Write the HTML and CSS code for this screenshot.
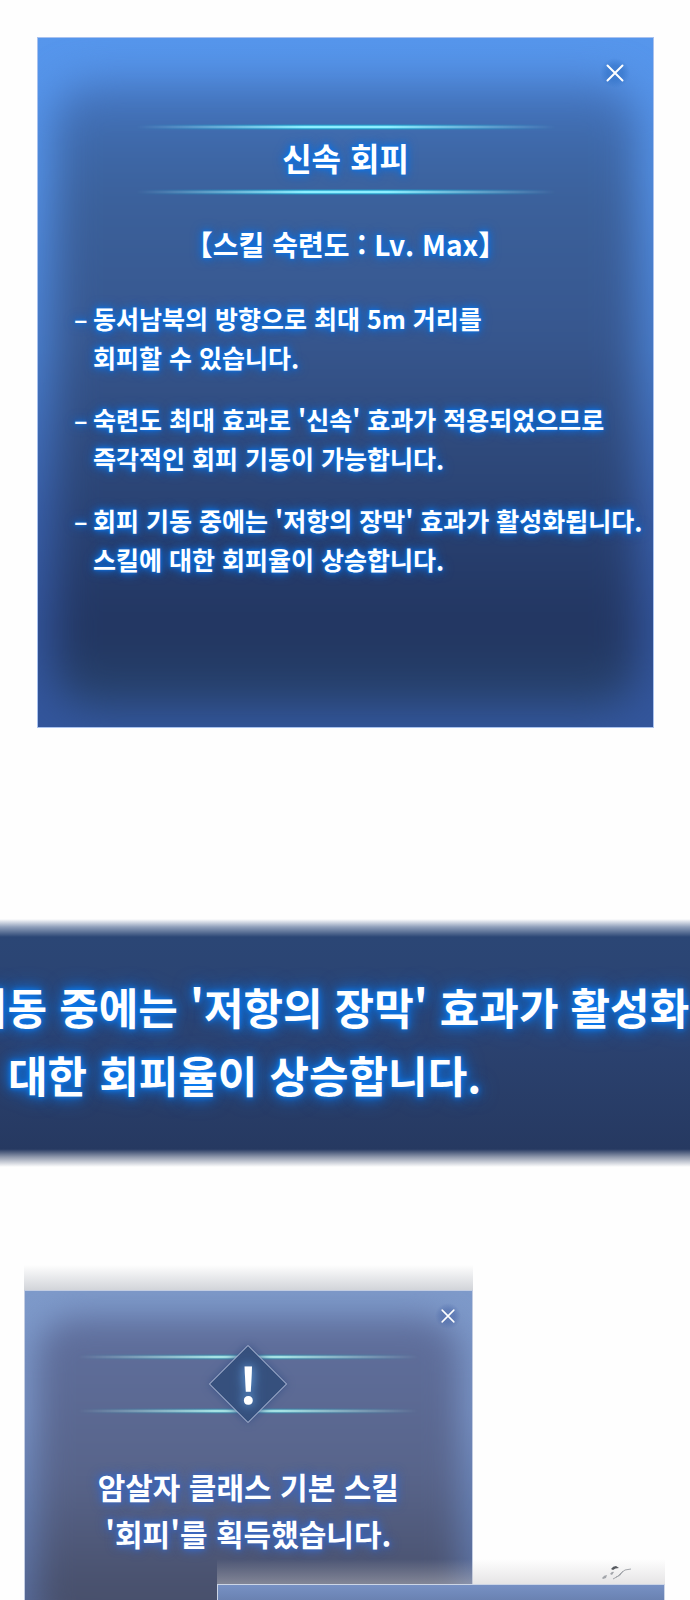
FILE: index.html
```html
<!DOCTYPE html>
<html lang="ko">
<head>
<meta charset="utf-8">
<meta name="viewport" content="width=device-width, initial-scale=1">
<title>신속 회피</title>
<link rel="stylesheet" href="styles.css">
</head>
<body>
<main class="page">
  <section class="panel skill">
    <button class="close" type="button" aria-label="닫기">
      <svg viewBox="0 0 18 18"><path d="M1.5 1.5 16.5 16.5M16.5 1.5 1.5 16.5"/></svg>
    </button>
    <header class="heading">
      <div class="rule"></div>
      <h1 class="title">신속 회피</h1>
      <div class="rule"></div>
      <p class="level">【스킬 숙련도 : Lv. Max】</p>
    </header>
    <ul class="effects">
      <li><span class="dash">–</span><span>동서남북의 방향으로 최대 5m 거리를<br>회피할 수 있습니다.</span></li>
      <li><span class="dash">–</span><span>숙련도 최대 효과로 '신속' 효과가 적용되었으므로<br>즉각적인 회피 기동이 가능합니다.</span></li>
      <li><span class="dash">–</span><span>회피 기동 중에는 '저항의 장막' 효과가 활성화됩니다.<br>스킬에 대한 회피율이 상승합니다.</span></li>
    </ul>
  </section>

  <section class="closeup">
    <p class="closeup-first">기동 중에는 '저항의 장막' 효과가 활성화</p>
    <p class="closeup-second">대한 회피율이 상승합니다.</p>
  </section>

  <section class="notices">
    <div class="notice-wrap">
      <div class="haze"></div>
      <div class="panel notice">
        <button class="close close-small" type="button" aria-label="닫기">
          <svg viewBox="0 0 18 18"><path d="M1.5 1.5 16.5 16.5M16.5 1.5 1.5 16.5"/></svg>
        </button>
        <div class="emblem">
          <div class="rule pale"></div>
          <div class="rule pale"></div>
          <div class="diamond">
            <svg viewBox="0 0 80 80"><path d="M40 1.5 78.5 40 40 78.5 1.5 40Z"/></svg>
            <span class="mark">!</span>
          </div>
        </div>
        <p class="message">암살자 클래스 기본 스킬<br>'회피'를 획득했습니다.</p>
      </div>
    </div>
    <div class="next-wrap">
      <div class="haze haze-next">
        <svg class="scribble" viewBox="0 0 32 18" aria-hidden="true">
          <path class="blot" d="M10 4Q12 1 15 1L18 3Q14 3 12 5Z"/>
          <path class="blot light" d="M1 13Q3 10 6 10L5 13 2 14ZM9 9Q11 6 13 7L11 10Z"/>
          <path class="stroke" d="M30 4Q23 4 20 8T12 14M22 6Q19 12 15 12"/>
        </svg>
      </div>
      <div class="next"></div>
    </div>
  </section>
</main>
</body>
</html>
```

FILE: styles.css
```css
* {
  box-sizing: border-box;
}

body {
  margin: 0;
  background: #fefefe;
  color: #fff;
  font-family: "Noto Sans CJK KR", "Noto Sans", sans-serif;
  font-weight: 700;
}

.page {
  overflow: hidden;
}

h1, p, ul {
  margin: 0;
  padding: 0;
}

.panel {
  position: relative;
  isolation: isolate;
  overflow: hidden;
  border: 1px solid #a9c2ef;
}

/* soft darker core inside the bright rim */
.panel::before {
  content: "";
  position: absolute;
  z-index: -1;
  inset: 44px 16px 20px;
  border-radius: 40px;
  filter: blur(20px);
}

.skill {
  margin: 37px 36px 0 37px;
  padding: 86px 36px 148px;
  background: linear-gradient(#5696ec, #5491e6 20%, #4a80d0 45%, #3a62ae 68%, #33559c 85%, #33569c);
}

.skill::before {
  background: linear-gradient(#4678c4, #3e68a8 10%, #3b609a 20%, #37578f 40%, #2f4a7c 58%, #284070 72%, #223560 88%, #28456f);
}

.close {
  position: absolute;
  top: 20px;
  right: 23px;
  width: 30px;
  height: 30px;
  padding: 6px;
  border: 0;
  border-radius: 8px;
  background: radial-gradient(closest-side, rgb(45 110 195 / 50%) 50%, transparent);
}

.close svg {
  display: block;
  fill: none;
  stroke: #fff;
  stroke-width: 2;
  stroke-linecap: round;
}

.close-small {
  top: 12px;
  right: 11px;
  width: 26px;
  height: 26px;
  background: radial-gradient(closest-side, rgb(75 105 170 / 50%) 50%, transparent);
}

.rule {
  width: 420px;
  max-width: 92%;
  height: 6px;
  margin: 0 auto;
  background: linear-gradient(transparent, #1e9cc8 20%, #8deeff 35% 65%, #1e9cc8 80%, transparent);
  -webkit-mask-image: linear-gradient(90deg, transparent, rgb(0 0 0 / 50%) 20%, #000 40% 60%, rgb(0 0 0 / 50%) 80%, transparent);
  mask-image: linear-gradient(90deg, transparent, rgb(0 0 0 / 50%) 20%, #000 40% 60%, rgb(0 0 0 / 50%) 80%, transparent);
}

.pale {
  width: 340px;
  background: linear-gradient(transparent, #3e85a6 20%, #a5e2e4 35% 65%, #3e85a6 80%, transparent);
}

.title,
.level,
.effects {
  text-shadow: 0 0 3px #0a78f0, 0 0 7px #0a74ea, 0 0 12px #0a6fe0;
}

.title {
  padding-bottom: 4px;
  font-size: 32px;
  line-height: 55px;
  text-align: center;
}

.level {
  margin-top: 30px;
  font-size: 28px;
  line-height: 38px;
  text-align: center;
  white-space: nowrap;
}

.effects {
  display: grid;
  gap: 23px;
  margin-top: 36px;
  font-size: 25px;
  line-height: 39px;
  list-style: none;
  white-space: nowrap;
}

.effects li {
  display: flex;
}

.dash {
  flex: none;
  width: 19px;
}

.closeup {
  margin-top: 191px;
  padding: 53px 0 59px;
  overflow: hidden;
  background: linear-gradient(#fefefe, #8f9fba 8px, #2b4675 18px, #2b4270 50%, #263961 calc(100% - 18px), #8f98ac calc(100% - 10px), #fefefe);
  font-size: 43px;
  line-height: 68px;
  white-space: nowrap;
  text-shadow: 0 0 5px #0a80f8, 0 0 12px #0a78f0, 0 0 20px #0a6fe0;
}

.closeup-first {
  margin-left: -32px;
}

.closeup-second {
  margin-left: 8px;
}

.notices {
  position: relative;
  margin-top: 98px;
}

.notice-wrap {
  width: 65%;
  margin-left: 24px;
}

.haze {
  height: 25px;
  background: linear-gradient(transparent, rgb(70 80 100 / 24%));
}

.notice {
  padding: 63px 0 43px;
  border-color: #c3cde2;
  border-bottom: 0;
  background: linear-gradient(#7e9aca, #7893c6 40%, #6680b4 70%, #586c9c);
}

.notice::before {
  inset: 26px 12px -40px;
  filter: blur(16px);
  background: linear-gradient(#60709e, #58648a 50%, #48506c 85%);
}

.emblem {
  display: grid;
  gap: 48px;
  position: relative;
}

.diamond {
  display: grid;
  place-content: center;
  place-items: center;
  position: absolute;
  inset: 0;
}

.diamond > * {
  grid-area: 1 / 1;
}

.diamond svg {
  width: 80px;
  height: 80px;
  fill: #36507d;
  stroke: #c0c9e2;
  filter: drop-shadow(0 0 4px #3b5488);
}

.mark {
  z-index: 1;
  padding-bottom: 4px;
  font-size: 50px;
  line-height: 60px;
  text-shadow: 0 0 8px #5b92d0, 0 0 14px #5b92d0;
}

.message {
  margin-top: 49px;
  font-size: 30px;
  line-height: 47px;
  text-align: center;
  white-space: nowrap;
  text-shadow: 0 0 4px #3b68c0, 0 0 8px #3b68c0, 0 0 12px #3b68c0;
}

/* the following card slides over the current one */
.next-wrap {
  position: absolute;
  right: 25px;
  bottom: 0;
  width: 65%;
}

.haze-next {
  display: flex;
  justify-content: flex-end;
  padding: 6px 32px 0 0;
  background: linear-gradient(transparent, rgb(200 198 200 / 45%));
}

.scribble {
  width: 32px;
  height: 18px;
}

.blot {
  fill: #55585e;
}

.light {
  fill: #a2a5aa;
}

.stroke {
  fill: none;
  stroke: #a2a5aa;
}

.next {
  height: 16px;
  border: 1px solid #ccd5e6;
  border-bottom: 0;
  background: linear-gradient(#7791c4, #6a82b2);
}
```
